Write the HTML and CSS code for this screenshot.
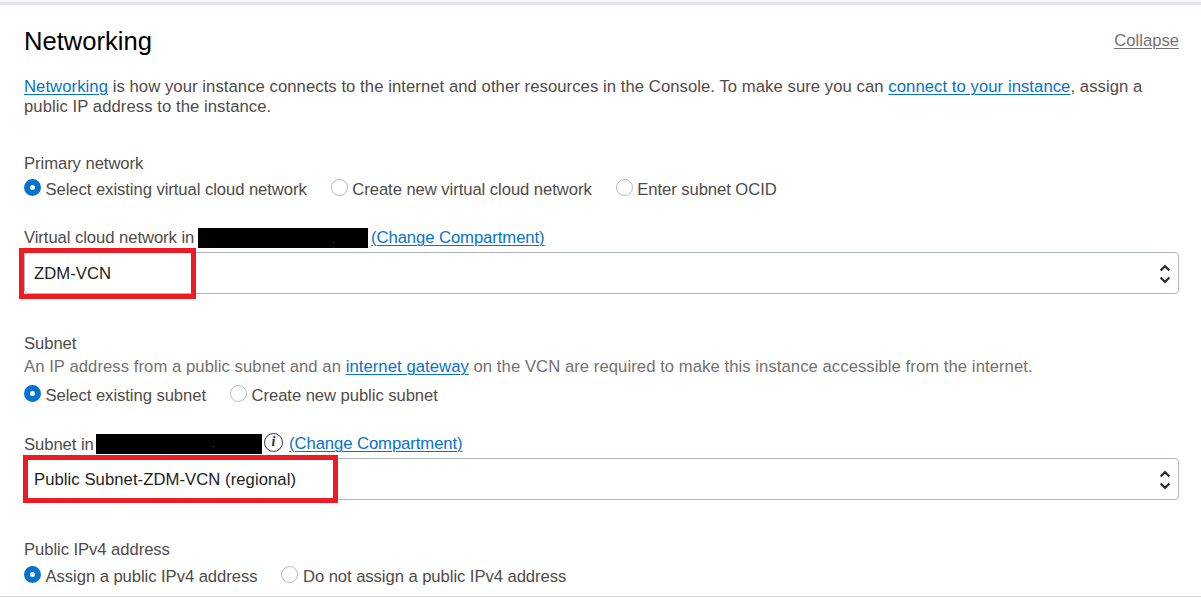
FILE: index.html
```html
<!DOCTYPE html>
<html lang="en">
<head>
<meta charset="utf-8">
<title>Networking</title>
<link rel="stylesheet" href="styles.css">
</head>
<body>
<main class="panel">
  <header class="panel-header">
    <h1 class="title">Networking</h1>
    <a class="collapse" href="#">Collapse</a>
  </header>
  <p class="intro"><a href="#">Networking</a> is how your instance connects to the internet and other resources in the Console. To make sure you can <a href="#">connect to your instance</a>, assign a<br>public IP address to the instance.</p>

  <section class="group primary">
    <div class="label">Primary network</div>
    <div class="radios">
      <label class="option"><span class="radio checked"></span><span class="option-text">Select existing virtual cloud network</span></label>
      <label class="option"><span class="radio"></span><span class="option-text">Create new virtual cloud network</span></label>
      <label class="option"><span class="radio"></span><span class="option-text">Enter subnet OCID</span></label>
    </div>
  </section>

  <section class="field vcn">
    <div class="field-label"><span class="field-name">Virtual cloud network in</span><span class="redacted"></span><a href="#">(Change Compartment)</a></div>
    <div class="select"><span class="value">ZDM-VCN</span>
      <svg class="arrows" viewBox="0 0 12 20"><path d="M1.6 6.5 6 2.1l4.4 4.4M1.6 13.5 6 17.9l4.4-4.4"/></svg>
      <span class="highlight"></span>
    </div>
  </section>

  <section class="group subnet">
    <div class="label">Subnet</div>
    <p class="hint">An IP address from a public subnet and an <a href="#">internet gateway</a> on the VCN are required to make this instance accessible from the internet.</p>
    <div class="radios">
      <label class="option"><span class="radio checked"></span><span class="option-text">Select existing subnet</span></label>
      <label class="option"><span class="radio"></span><span class="option-text">Create new public subnet</span></label>
    </div>
  </section>

  <section class="field subnet-field">
    <div class="field-label"><span class="field-name">Subnet in</span><span class="redacted"></span>
      <span class="info">i</span><a href="#">(Change Compartment)</a></div>
    <div class="select"><span class="value">Public Subnet-ZDM-VCN (regional)</span>
      <svg class="arrows" viewBox="0 0 12 20"><path d="M1.6 6.5 6 2.1l4.4 4.4M1.6 13.5 6 17.9l4.4-4.4"/></svg>
      <span class="highlight"></span>
    </div>
  </section>

  <section class="group address">
    <div class="label">Public IPv4 address</div>
    <div class="radios">
      <label class="option"><span class="radio checked"></span><span class="option-text">Assign a public IPv4 address</span></label>
      <label class="option"><span class="radio"></span><span class="option-text">Do not assign a public IPv4 address</span></label>
    </div>
  </section>
</main>
</body>
</html>
```
FILE: styles.css
```css
* { box-sizing: border-box; }
body {
  margin: 0;
  height: 598px;
  overflow: hidden;
  background: #fff;
  border-top: 2px solid #f5f6f7;
  color: #4f4b48;
  font: 16.67px/20px "Liberation Sans", Arial, sans-serif;
  letter-spacing: -0.07px;
  white-space: nowrap;
}
a { color: #0572ce; text-decoration-thickness: 1px; text-underline-offset: 2px; }
p, h1 { margin: 0; }
.panel {
  height: 595px;
  padding: 0 22px 0 24px;
  border-top: 3px solid #e1e3e8;
  border-bottom: 1px solid #e1e1e1;
}
.panel-header {
  display: flex;
  justify-content: space-between;
  align-items: flex-start;
  height: 72px;
  padding-top: 21px;
}
.title { color: #000; font-size: 25.6px; font-weight: 400; line-height: 30px; letter-spacing: 0; }
.collapse { margin-top: 5px; color: #75716e; letter-spacing: 0; }
.intro { height: 40px; letter-spacing: 0.064px; }
.primary { margin-top: 37px; }
.label { height: 20px; }
.radios { display: flex; gap: 24px; height: 20px; margin-top: 5px; }
.option { display: flex; gap: 4.5px; }
.option-text { padding-top: 1px; }
.radio {
  width: 17px;
  height: 17px;
  border: 1px solid #b4b9c4;
  border-radius: 50%;
  background: #fff;
}
.radio.checked { border: 6px solid #0572ce; }
.field { margin-top: 28px; }
.field-label { display: flex; height: 25px; padding-top: 1px; }
.redacted {
  height: 20px;
  background: linear-gradient(#3d4a70, #3d4a70) no-repeat 135px 14px / 1px 1px #000;
}
.vcn .field-name { width: 174px; }
.vcn .redacted { width: 170px; margin-right: 3px; }
.select {
  position: relative;
  display: flex;
  align-items: center;
  justify-content: space-between;
  height: 42px;
  padding: 0 7px 0 9px;
  border: 1px solid #aeb5c0;
  border-radius: 4px;
  color: #211e1c;
  letter-spacing: 0.06px;
}
.value { padding-top: 2px; }
.arrows { width: 12px; height: 20px; margin-top: 1px; fill: none; stroke: #302d2b; stroke-width: 2.2; }
.highlight { position: absolute; border: 5px solid #ed1c24; }
.vcn .highlight { left: -6px; top: -5px; width: 177px; height: 51px; }
.subnet { margin-top: 40px; }
.hint { margin-top: 3px; color: #75716e; letter-spacing: 0.06px; }
.subnet .radios { margin-top: 8px; }
.subnet-field .field-name { width: 72px; padding-top: 1px; }
.subnet-field .redacted { width: 166px; background-position: 117px 12px; }
.info {
  width: 19px;
  height: 19px;
  margin: -1px 6px 0 2px;
  border: 1.5px solid #3c3835;
  border-radius: 50%;
  color: #302d2b;
  font: italic bold 14px/16px "Liberation Serif", serif;
  text-align: center;
}
.subnet-field .highlight { left: -2px; top: -4px; width: 315px; height: 48px; }
.address { margin-top: 40px; }
.address .radios { margin-top: 6px; }
```
